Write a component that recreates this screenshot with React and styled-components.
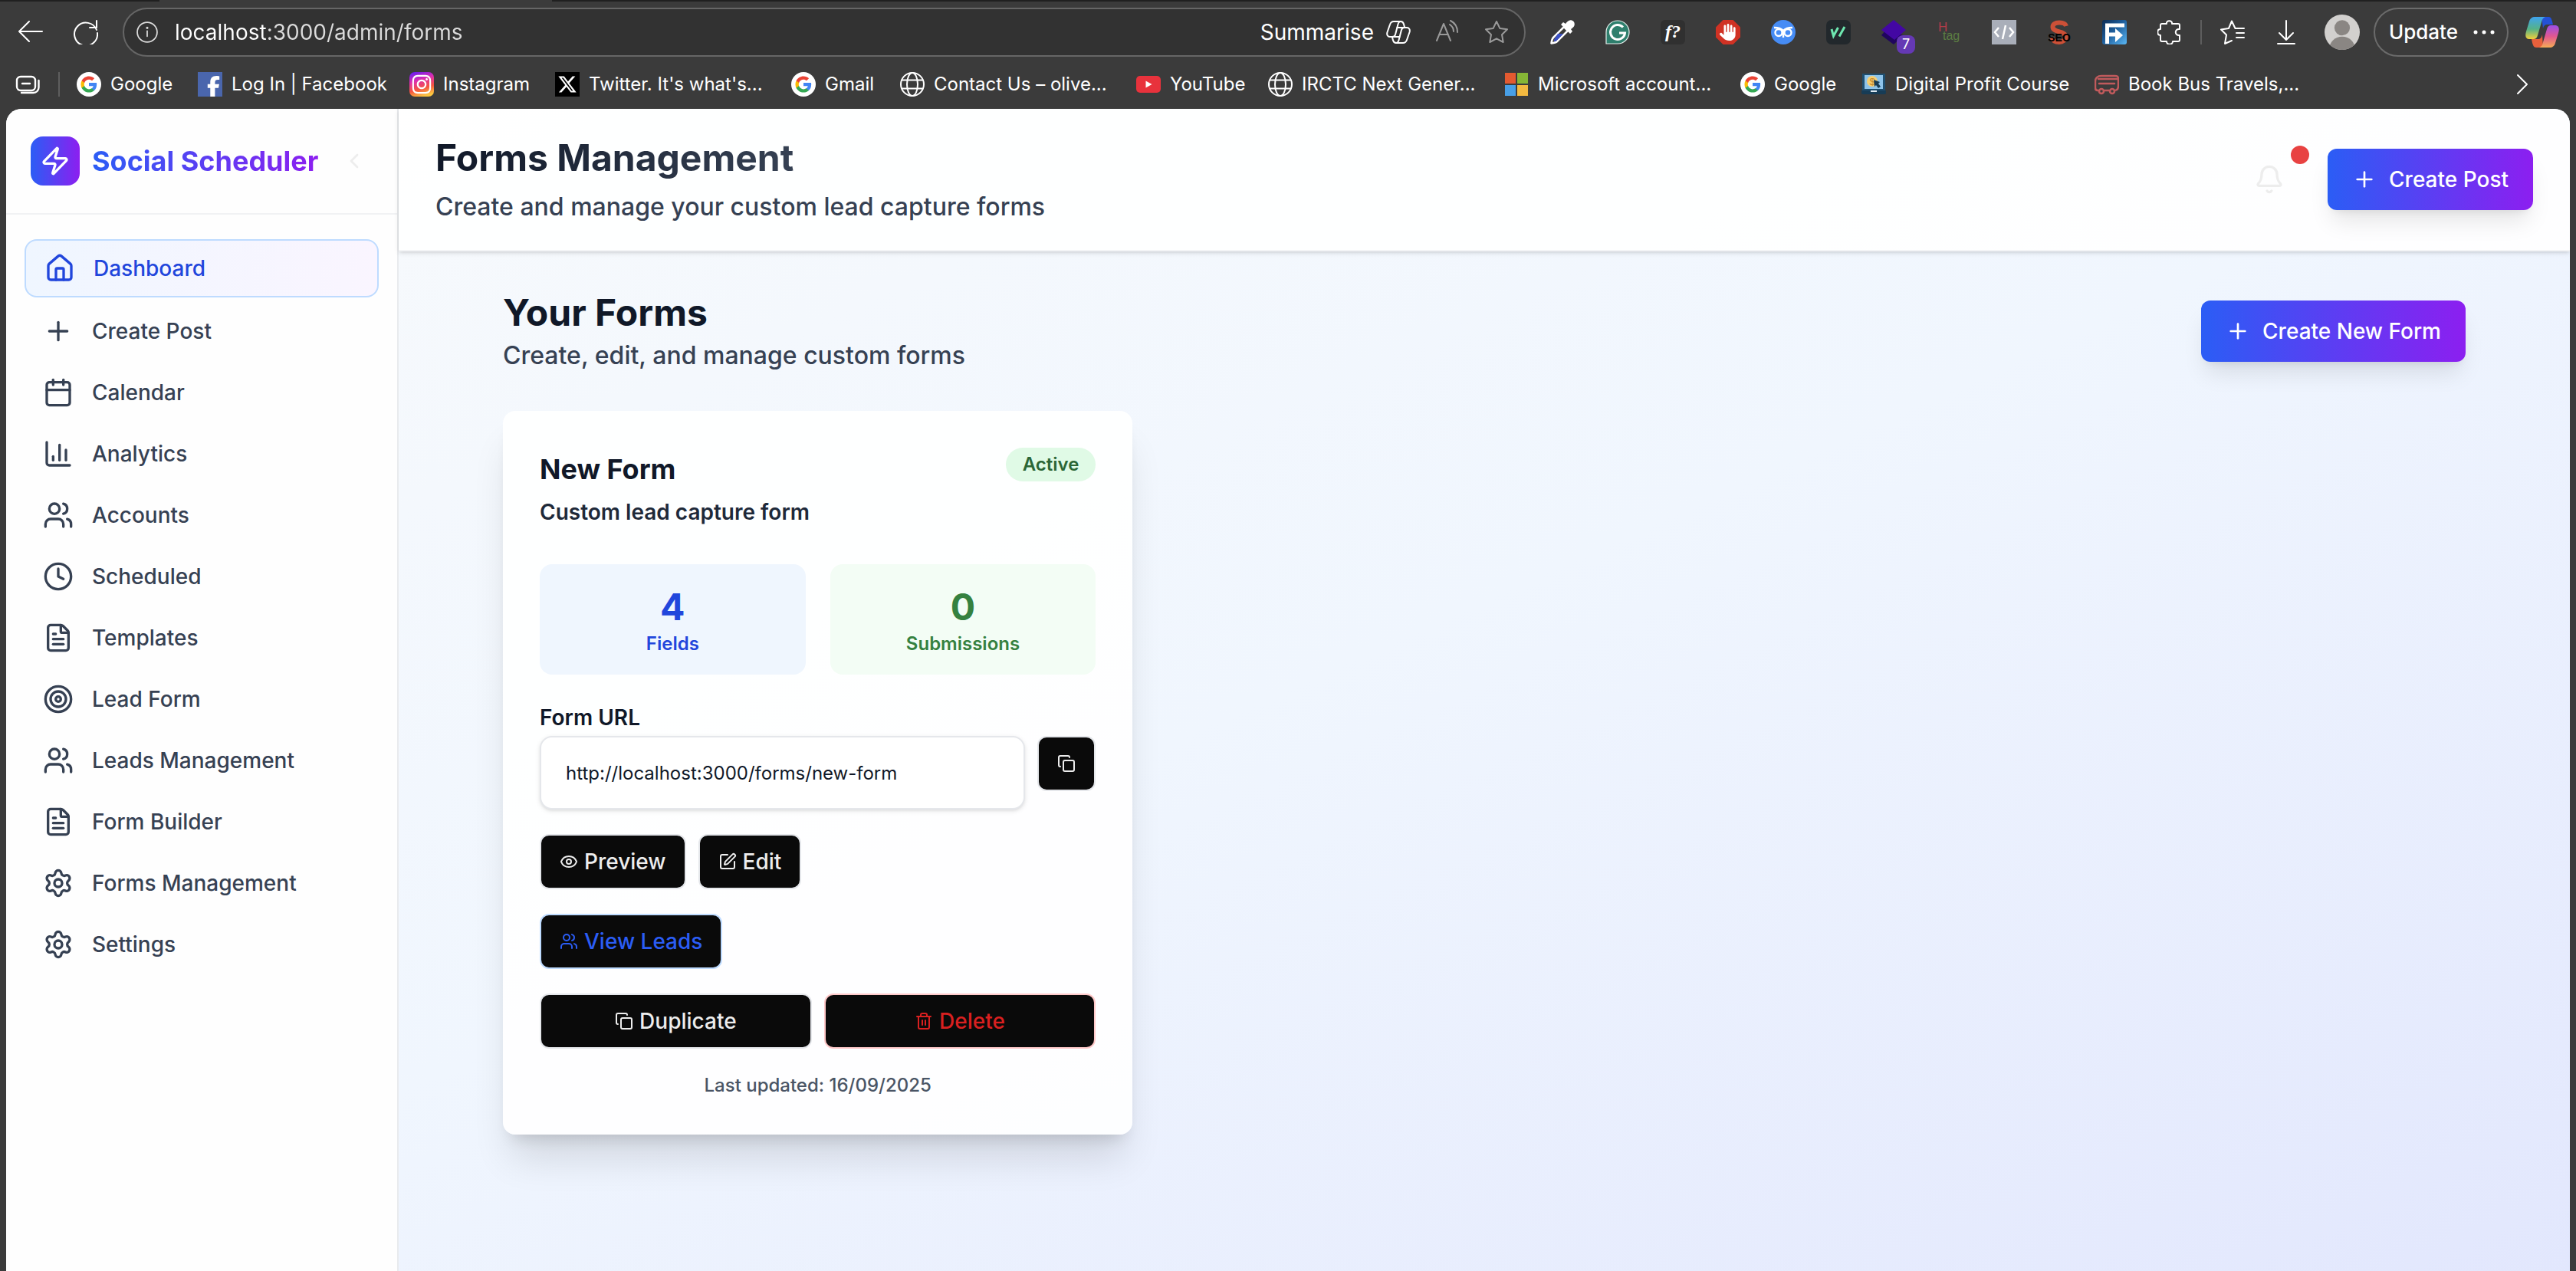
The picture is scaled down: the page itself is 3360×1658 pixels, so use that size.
import React from "react";
import styled, { createGlobalStyle, css } from "styled-components";
import {
  Bell, Calendar, ChartColumn, ChevronLeft, Clock, Copy, Eye, FileText, House,
  Plus, Settings, SquarePen, Target, Trash2, Users, Zap,
} from "lucide-react";
import { FaFacebookF, FaXTwitter, FaHand, FaInstagram } from "react-icons/fa6";

const brandGradient = "linear-gradient(90deg, #2b5df5 0%, #8c1ff0 100%)";

const GlobalStyle = createGlobalStyle`
  *, *::before, *::after { box-sizing: border-box; }
  body {
    margin: 0;
    background: #3b3b3b;
    font-family: Inter, "Liberation Sans", sans-serif;
    -webkit-font-smoothing: antialiased;
  }
  h1, h2, h3, p, ul, dl, dd, dt { margin: 0; padding: 0; }
  ul { list-style: none; }
  a { color: inherit; text-decoration: none; }
  button { font: inherit; cursor: pointer; margin: 0; }
  svg { display: block; flex: none; }
`;

/* ---------- browser chrome ---------- */

const Browser = styled.div`
  display: flex;
  flex-direction: column;
  min-height: 100vh;
  background: #3b3b3b;
  color: #ffffff;
`;

const TabStrip = styled.div`
  height: 2px;
  padding-left: 208px;
  background: #202020;
`;

const ActiveTab = styled.div`
  width: 512px;
  height: 2px;
  background: #3b3b3b;
`;

const Toolbar = styled.div`
  display: flex;
  align-items: center;
  padding: 8px 22px 0 24px;
`;

const ToolGroup = styled.div`
  display: flex;
  align-items: center;
  gap: ${(p) => p.$gap}px;
`;

const IconButton = styled.button`
  position: relative;
  display: flex;
  align-items: center;
  justify-content: center;
  padding: 0;
  border: 0;
  background: none;
  color: ${(p) => p.$color || "#ffffff"};
`;

const AddressBar = styled.div`
  flex: 1;
  display: flex;
  align-items: center;
  height: 64px;
  margin: 0 32px;
  padding: 0 20px 0 16px;
  border: 2px solid #666666;
  border-radius: 32px;
  background: #323232;
`;

const AddressInput = styled.input`
  flex: 1;
  min-width: 0;
  margin: 0 22px;
  padding: 0;
  border: 0;
  outline: 0;
  font: 400 28px/40px Inter, "Liberation Sans", sans-serif;
  color: transparent;
  background: linear-gradient(90deg, #ffffff 120px, #dcdcdc 120px);
  background-clip: text;
  -webkit-background-clip: text;
`;

const Summarise = styled.button`
  display: flex;
  align-items: center;
  gap: 16px;
  padding: 0;
  border: 0;
  background: none;
  color: #ffffff;
  font-size: 28px;
  line-height: 40px;
`;

const ChromeDivider = styled.span`
  width: 2px;
  height: 32px;
  margin: 0 ${(p) => p.$after}px 0 24px;
  background: #5e5e5e;
`;

const CountBadge = styled.span`
  position: absolute;
  left: 20px;
  top: 20px;
  width: 24px;
  height: 24px;
  border-radius: 8px;
  background: #6539b4;
  color: #ffffff;
  font-size: 18px;
  line-height: 24px;
  text-align: center;
`;

const UpdateButton = styled.button`
  display: flex;
  align-items: center;
  gap: 20px;
  height: 64px;
  margin: 0 22px 0 18px;
  padding: 0 16px 0 18px;
  border: 2px solid #6b6b6b;
  border-radius: 32px;
  background: none;
  color: #ffffff;
  font-size: 26px;
  font-weight: 500;
  line-height: 40px;
`;

const BookmarkBar = styled.nav`
  display: flex;
  align-items: center;
  padding: 20px 54px 16px 20px;
`;

const BookmarkList = styled.ul`
  flex: 1;
  display: flex;
  align-items: center;
  gap: 32px;
  min-width: 0;
`;

const Bookmark = styled.a`
  display: flex;
  align-items: center;
  gap: 12px;
  width: ${(p) => p.$width}px;
  font-size: 24px;
  line-height: 32px;
  white-space: nowrap;
`;

/* ---------- application shell ---------- */

const AppFrame = styled.div`
  flex: 1;
  display: flex;
  margin: 0 8px;
  overflow: hidden;
  border-radius: 20px 20px 0 0;
  background: linear-gradient(to bottom right, #f8fafc 0%, #f0f6fe 50%, #e2e7fd 100%);
  color: #101828;
`;

const Sidebar = styled.aside`
  flex: none;
  width: 512px;
  border-right: 2px solid #e9ebee;
  background: #fefefe;
`;

const SidebarHeader = styled.div`
  display: flex;
  align-items: center;
  gap: 16px;
  height: 138px;
  padding: 0 32px;
  border-bottom: 2px solid #f1f2f4;
`;

const LogoTile = styled.span`
  display: flex;
  align-items: center;
  justify-content: center;
  width: 64px;
  height: 64px;
  border-radius: 16px;
  background: ${brandGradient};
  color: #ffffff;
`;

const LogoText = styled.span`
  font-size: 36px;
  font-weight: 700;
  line-height: 56px;
  white-space: nowrap;
  color: transparent;
  background: ${brandGradient};
  background-clip: text;
  -webkit-background-clip: text;
`;

const CollapseButton = styled(IconButton)`
  margin-left: auto;
  width: 48px;
  height: 48px;
`;

const NavList = styled.ul`
  display: flex;
  flex-direction: column;
  gap: 8px;
  padding: 32px 24px;
`;

const NavLink = styled.a`
  display: flex;
  align-items: center;
  gap: 24px;
  padding: 16px 24px;
  border-radius: 16px;
  color: #364153;
  font-size: 28px;
  font-weight: 500;
  line-height: 40px;
  ${(p) =>
    p.$active &&
    css`
      border: 2px solid #bedbff;
      background: linear-gradient(90deg, #eff6ff, #faf5ff);
      color: #2146dc;
    `}
`;

const Workspace = styled.div`
  flex: 1;
  min-width: 0;
`;

const PageHeader = styled.header`
  display: flex;
  align-items: center;
  justify-content: space-between;
  padding: 32px 48px;
  border-bottom: 2px solid #f3f4f6;
  background: rgba(255, 255, 255, 0.9);
  box-shadow: 0 2px 6px rgba(0, 0, 0, 0.12), 0 2px 4px -2px rgba(0, 0, 0, 0.12);
`;

const Heading = styled.div`
  display: flex;
  flex-direction: column;
  gap: ${(p) => p.$gap}px;
`;

const PageTitle = styled.h1`
  width: fit-content;
  font-size: 48px;
  font-weight: 700;
  line-height: 64px;
  color: transparent;
  background: linear-gradient(90deg, #101828, #364153);
  background-clip: text;
  -webkit-background-clip: text;
`;

const SectionTitle = styled.h2`
  font-size: 48px;
  font-weight: 700;
  line-height: 64px;
`;

const Lead = styled.p`
  color: #364153;
  font-size: 32px;
  font-weight: 500;
  line-height: 48px;
`;

const HeaderActions = styled.div`
  display: flex;
  align-items: center;
  gap: 32px;
`;

const BellButton = styled(IconButton)`
  width: 88px;
  height: 72px;
`;

const AlertDot = styled.span`
  position: absolute;
  top: -8px;
  right: -8px;
  width: 24px;
  height: 24px;
  border-radius: 50%;
  background: #e84242;
`;

const PrimaryButton = styled.button`
  display: flex;
  align-items: center;
  gap: 16px;
  height: 80px;
  padding: 0 32px;
  border: 0;
  border-radius: 12px;
  background: ${brandGradient};
  color: #ffffff;
  font-size: 28px;
  font-weight: 500;
  line-height: 40px;
  white-space: nowrap;
  box-shadow: 0 20px 30px -6px rgba(0, 0, 0, 0.1), 0 8px 12px -8px rgba(0, 0, 0, 0.1);
`;

const Main = styled.main`
  display: flex;
  flex-direction: column;
  gap: 48px;
  max-width: 2656px;
  margin: 0 auto;
  padding: 48px;
`;

const SectionHeader = styled.div`
  display: flex;
  align-items: center;
  justify-content: space-between;
`;

const CardGrid = styled.div`
  display: grid;
  grid-template-columns: repeat(3, minmax(0, 1fr));
  gap: 48px;
`;

/* ---------- form card ---------- */

const Card = styled.article`
  display: flex;
  flex-direction: column;
  gap: 32px;
  padding: 48px;
  border-radius: 16px;
  background: rgba(255, 255, 255, 0.9);
  box-shadow: 0 40px 50px -10px rgba(0, 0, 0, 0.12), 0 16px 20px -12px rgba(0, 0, 0, 0.14);
`;

const CardHeader = styled.div`
  display: flex;
  align-items: flex-start;
  justify-content: space-between;
  margin-bottom: 16px;
`;

const CardTitle = styled.h3`
  font-size: 36px;
  font-weight: 700;
  line-height: 56px;
`;

const CardText = styled.p`
  color: #1e2939;
  font-size: 28px;
  font-weight: 600;
  line-height: 40px;
`;

const StatusBadge = styled.span`
  padding: 6px 22px;
  border-radius: 22px;
  background: #e0fae6;
  color: #2b6636;
  font-size: 24px;
  font-weight: 600;
  line-height: 32px;
`;

const Stats = styled.dl`
  display: grid;
  grid-template-columns: 1fr 1fr;
  gap: 32px;
`;

const Stat = styled.div`
  display: flex;
  flex-direction: column-reverse;
  padding: 24px;
  border-radius: 16px;
  background: ${(p) => p.$background};
  color: ${(p) => p.$color};
  text-align: center;
`;

const StatLabel = styled.dt`
  font-size: 24px;
  font-weight: 600;
  line-height: 32px;
`;

const StatValue = styled.dd`
  font-size: 48px;
  font-weight: 700;
  line-height: 64px;
`;

const UrlField = styled.div`
  display: flex;
  flex-direction: column;
`;

const UrlLabel = styled.label`
  font-size: 28px;
  font-weight: 600;
  line-height: 48px;
`;

const Row = styled.div`
  display: flex;
  align-items: flex-start;
  gap: 16px;
`;

const UrlInput = styled.input`
  flex: 1;
  min-width: 0;
  height: 96px;
  padding: 0 32px;
  border: 2px solid #e5e7eb;
  border-radius: 16px;
  outline: 0;
  background: #ffffff;
  color: #101828;
  font: 400 24px/32px Inter, "Liberation Sans", sans-serif;
  box-shadow: 0 2px 6px rgba(0, 0, 0, 0.1), 0 2px 4px -2px rgba(0, 0, 0, 0.1);
`;

const tones = {
  plain: { text: "#ededed", border: "#e5e7eb" },
  blue: { text: "#2b5df5", border: "#bedbff" },
  red: { text: "#d92020", border: "#ffc9c9" },
};

const ActionButton = styled.button`
  flex: ${(p) => (p.$wide ? 1 : "none")};
  display: flex;
  align-items: center;
  justify-content: center;
  gap: 8px;
  height: 72px;
  padding: 0 24px;
  border: 2px solid ${(p) => tones[p.$tone].border};
  border-radius: 12px;
  background: #0a0a0a;
  color: ${(p) => tones[p.$tone].text};
  font-size: 28px;
  font-weight: 500;
  line-height: 40px;
`;

const Updated = styled.p`
  color: #4a5565;
  font-size: 24px;
  font-weight: 500;
  line-height: 32px;
  text-align: center;
`;

/* ---------- chrome icons ---------- */

const Line = ({ children, size = 32, width = 2, ...rest }) => (
  <svg width={size} height={size} viewBox="0 0 32 32" fill="none" stroke="currentColor"
    strokeWidth={width} strokeLinecap="round" strokeLinejoin="round" aria-hidden="true" {...rest}>
    {children}
  </svg>
);

const Art = ({ children, size = 32, ...rest }) => (
  <svg width={size} height={size} viewBox="0 0 32 32" aria-hidden="true" {...rest}>{children}</svg>
);

const BackIcon = () => <Line><path d="M31 15H1M14 2 1 15l13 13" /></Line>;
const ReloadIcon = () => <Line><path d="M30 13A15 15 0 1 0 31 17M30 1v9h-9" /></Line>;
const InfoIcon = () => (
  <Line size={28}><circle cx="16" cy="16" r="14.8" /><path d="M16 14v8" /><circle cx="16" cy="9.5" r=".8" fill="currentColor" /></Line>
);
const CopilotOutline = () => (
  <Line>
    <path d="M10 2h9c-2 0-3 1.500-3.600 4L12 19c-.6 2-2 3-4 3H5c-3 0-4.500-2.500-3.500-6L5 6c.8-2.500 2.500-4 5-4z" />
    <path d="M22 30h-9c2 0 3-1.500 3.600-4L20 13c.6-2 2-3 4-3h3c3 0 4.500 2.500 3.500 6L27 26c-.8 2.500-2.500 4-5 4z" />
    <path d="M19 2c2.500 0 3.500 1.500 4 3.500l1.200 4.500M13 30c-2.500 0-3.500-1.500-4-3.500L7.800 22M14.500 10H24M8 22h9.500" />
  </Line>
);
const ReadAloudIcon = () => <Line><path d="M2 27 11 5l9 22M5 19h12M19 6c3 2 5 5 5 9M20 1c6 3 9 8 9 15" /></Line>;
const StarIcon = () => (
  <Line><path d="M16 2l4.300 8.900 9.700 1.400-7 6.900 1.700 9.800L16 24.300 7.300 29 9 19.200l-7-6.900 9.700-1.400z" /></Line>
);
const DropperIcon = () => (
  <Art>
    <path d="M18 9 4 23c-1 1-2 4-2.500 7.500C5 30 8 29 9 28l14-14z" fill="#3b3b3b" stroke="#fff" strokeWidth="2.600" strokeLinejoin="round" />
    <path d="M10 18h7l-8.500 9c-1 .8-3 1.200-3.500 1-.3-1 .2-3 1-4z" fill="#3b50c4" />
    <path d="m14 6 3-3 3 2c2-3 5-5.500 8-4.500 4 1 5 6 2 9-1 1-2 2-3 2.500l2 3-3 3z" fill="#fff" />
  </Art>
);
const GrammarIcon = () => (
  <Art>
    <path d="M1 31V16A15 15 0 1 1 16 31z" fill="#2f7f6d" stroke="#e8f2ef" strokeWidth="1.200" />
    <path d="M23 9.500A9.500 9.500 0 1 0 25.500 17H18" fill="none" stroke="#fff" strokeWidth="3" />
  </Art>
);
const FontIcon = () => (
  <Art>
    <rect width="32" height="32" rx="6" fill="#303030" />
    <text x="16" y="23" textAnchor="middle" fill="#fff" fontFamily="Liberation Serif, serif" fontStyle="italic" fontWeight="700" fontSize="24">f?</text>
  </Art>
);
const StopHandIcon = () => (
  <Art>
    <path d="M9.500 0h13L32 9.500v13L22.500 32h-13L0 22.500v-13z" fill="#d03224" />
    <FaHand color="#fff" size={22} x="5" y="5" />
  </Art>
);
const OwlIcon = () => (
  <Art>
    <circle cx="16" cy="16" r="16" fill="#468cf5" />
    <g fill="none" stroke="#fff" strokeWidth="2.400">
      <circle cx="10" cy="16.500" r="4.500" /><circle cx="22" cy="16.500" r="4.500" />
      <path d="M4 10c5 0 9 1 12 4 3-3 7-4 12-4M16 15v8" />
    </g>
  </Art>
);
const SlashIcon = () => (
  <Art>
    <rect width="32" height="32" rx="7" fill="#22282c" />
    <path d="M7 12l2.500 9 6-11M17 21.500l7-12.500" fill="none" stroke="#6ee7b0" strokeWidth="3" />
  </Art>
);
const LayersIcon = () => (
  <Art>
    <path d="M0 20 5 14l24 6-13 12z" fill="#20055e" />
    <path d="M16 0 32 13 17 26 0 13z" fill="#4307a3" />
  </Art>
);
const HtagIcon = () => (
  <Art>
    <text x="2" y="15" fill="#b23c49" fontFamily="Liberation Sans, sans-serif" fontSize="17">H</text>
    <text x="8" y="26" fill="#5b7d43" fontFamily="Liberation Sans, sans-serif" fontSize="16">tag</text>
  </Art>
);
const CodeIcon = () => (
  <Art>
    <path d="M0 0h32v32H0z" fill="#a9aeb9" />
    <path d="M9 10l-5 6 5 6M23 10l5 6-5 6M18 7l-4 18" fill="none" stroke="#fff" strokeWidth="2.500" />
  </Art>
);
const SeoIcon = () => (
  <Art>
    <path d="M25 8C24 4.500 21 3.500 16 3.500 10 3.500 7.500 6 7.500 9c0 8 17 5 17 13 0 4-4 7-8.500 7-6 0-8.500-2-9.500-6" fill="none" stroke="#cc5037" strokeWidth="6" />
    <text x="16" y="28" textAnchor="middle" fill="#000" fontFamily="Liberation Sans, sans-serif" fontWeight="700" fontSize="14">SEO</text>
  </Art>
);
const ForwardIcon = () => (
  <Art>
    <defs><linearGradient id="fwd" x1="0" y1="0" x2="1" y2="1"><stop stopColor="#0d2b52" /><stop offset=".45" stopColor="#1d5d9b" /><stop offset="1" stopColor="#5bb8f5" /></linearGradient></defs>
    <rect width="32" height="32" rx="3" fill="url(#fwd)" />
    <path d="M6.500 31V7H29M7 19h14" fill="none" stroke="#fff" strokeWidth="5" />
    <path d="M17 11l10 9-10 9z" fill="#fff" />
  </Art>
);
const PuzzleIcon = () => (
  <Line><path d="M6 5h6c-1-5 8-5 7 0h8c1 0 2 1 2 2v5c-7-1-7 9 0 8v6c0 1-1 2-2 2h-7c0 5-8 5-8 0H6c-1 0-2-1-2-2v-6c-5 0-5-8 0-8V7c0-1 1-2 2-2z" /></Line>
);
const FavoritesIcon = () => (
  <Line><path d="M31 11H19.500L15 1.500 11 11 1 12.500l7 7L6 31l9-4M21 17h10M21 23h10" /></Line>
);
const DownloadIcon = () => <Line><path d="M18 1v24M9 17l9 9 9-9M7 31h22" /></Line>;
const AvatarIcon = () => (
  <Art size={46}>
    <defs><clipPath id="face"><circle cx="16" cy="16" r="16" /></clipPath></defs>
    <g clipPath="url(#face)">
      <path d="M0 0h32v32H0z" fill="#d2d0ce" />
      <circle cx="16" cy="12" r="7" fill="#8a8683" />
      <circle cx="16" cy="32" r="12" fill="#8a8683" />
    </g>
  </Art>
);
const DotsIcon = () => (
  <svg width="28" height="8" viewBox="0 0 28 8" fill="currentColor" aria-hidden="true">
    <circle cx="3" cy="4" r="2.500" /><circle cx="14" cy="4" r="2.500" /><circle cx="25" cy="4" r="2.500" />
  </svg>
);
const CopilotIcon = () => (
  <svg width="44" height="44" viewBox="0 0 44 44" aria-hidden="true">
    <defs>
      <linearGradient id="cpA" x1="0" y1="0" x2="0" y2="1"><stop stopColor="#3fa4f0" /><stop offset=".55" stopColor="#55b287" /><stop offset="1" stopColor="#f2cf3b" /></linearGradient>
      <linearGradient id="cpB" x1="0" y1="0" x2="0" y2="1"><stop stopColor="#9a4ee8" /><stop offset=".5" stopColor="#e2578f" /><stop offset="1" stopColor="#f5ac55" /></linearGradient>
    </defs>
    <path d="M21 2h9c3 0 4 2 5 6l1 4h-7c-4 0-5 2-6 5z" fill="#2451d6" />
    <path d="M23 42h-9c-3 0-4-3-5-6l-1-5h8c4 0 5-2 6-6z" fill="#e8603c" />
    <path d="M12 2h14c-3 1-4 3-5 7l-5 17c-1 4-3 5-6 5H6c-5 0-7-3-5-10L5 8c1-4 4-6 7-6z" fill="url(#cpA)" />
    <path d="M32 42H18c3-1 4-3 5-7l5-17c1-4 3-5 6-5h4c5 0 7 3 5 10l-4 13c-1 4-4 6-7 6z" fill="url(#cpB)" />
  </svg>
);
const DrawerIcon = () => (
  <Line width={2.400}><rect x="2" y="6" width="24" height="18" rx="5" /><path d="M9 15h10M30.500 11v9c0 4-3 7-7 7H8" /></Line>
);
const GoogleIcon = () => (
  <Art>
    <circle cx="16" cy="16" r="16" fill="#fff" />
    <g transform="translate(4.500 4.500) scale(.96)">
      <path fill="#4285F4" d="M22.560 12.250c0-.78-.07-1.530-.2-2.250H12v4.260h5.920c-.26 1.370-1.040 2.530-2.210 3.310v2.770h3.570c2.080-1.920 3.280-4.740 3.280-8.090z" />
      <path fill="#34A853" d="M12 23c2.970 0 5.460-.98 7.280-2.660l-3.570-2.770c-.98.66-2.230 1.060-3.710 1.060-2.860 0-5.290-1.930-6.160-4.530H2.180v2.840C3.990 20.530 7.700 23 12 23z" />
      <path fill="#FBBC05" d="M5.840 14.090c-.22-.66-.35-1.360-.35-2.090s.13-1.430.35-2.090V7.070H2.180C1.430 8.550 1 10.220 1 12s.43 3.450 1.180 4.930l3.660-2.840z" />
      <path fill="#EA4335" d="M12 5.380c1.620 0 3.060.56 4.210 1.640l3.150-3.150C17.450 2.090 14.970 1 12 1 7.700 1 3.990 3.470 2.180 7.070l3.660 2.840c.87-2.600 3.300-4.530 6.160-4.530z" />
    </g>
  </Art>
);
const FacebookIcon = () => (
  <Art>
    <path d="M0 0h32v32H0z" fill="#4a66ad" />
    <FaFacebookF color="#fff" size={27} x="7" y="5" />
  </Art>
);
const InstagramIcon = () => (
  <Art>
    <defs><linearGradient id="ig" x1="0.200" y1="0" x2="0.500" y2="1"><stop stopColor="#6a1df0" /><stop offset=".35" stopColor="#dc2fb0" /><stop offset=".7" stopColor="#f5543f" /><stop offset="1" stopColor="#fbc53f" /></linearGradient></defs>
    <rect width="32" height="32" rx="7" fill="url(#ig)" />
    <FaInstagram color="#fff" size={28} x="2" y="2" />
  </Art>
);
const XIcon = () => (
  <Art>
    <path d="M0 0h32v32H0z" fill="#000" />
    <FaXTwitter color="#fff" size={26} x="3" y="3" />
  </Art>
);
const GlobeIcon = () => (
  <Line><circle cx="16" cy="16" r="15" /><ellipse cx="16" cy="16" rx="7" ry="15" /><path d="M2.500 10.500h27M2.500 21.500h27" /></Line>
);
const YouTubeIcon = () => (
  <Art><rect y="5" width="32" height="22" rx="5" fill="#e8323c" /><path d="M12.500 11.500v9l8-4.500z" fill="#fff" /></Art>
);
const MicrosoftIcon = () => (
  <Art>
    <path d="M1 1h14v14H1z" fill="#e35a30" /><path d="M17 1h14v14H17z" fill="#86b636" />
    <path d="M1 17h14v14H1z" fill="#489fe6" /><path d="M17 17h14v14H17z" fill="#f3b940" />
  </Art>
);
const CourseIcon = () => (
  <Art>
    <path d="M1 2h30v22H1z" fill="#1f4f70" /><path d="M4 4h24v18H4z" fill="#8fc4ea" />
    <circle cx="14" cy="12" r="7" fill="#f5ce73" />
    <text x="14" y="17" textAnchor="middle" fill="#c7892a" fontFamily="Liberation Sans, sans-serif" fontSize="13">$</text>
    <path d="m16 10 8 3-2 2 3 4-3 2-3-4-2 2z" fill="#173c56" />
    <path d="M0 24h32v3c0 1-1 2-2 2H2c-1 0-2-1-2-2z" fill="#173c56" /><path d="M12 24h8v2h-8z" fill="#dfeaf2" />
  </Art>
);
const BusIcon = () => (
  <Line width={2.500} stroke="#c05a5c">
    <path d="M9 5h18c3 0 4 1 4 4v9c0 4-2 6-5 6M5 9h25M9 5C4 5 1 8 1 12v9c0 2 1 3 4 3M6 15h20M13 24h6" /><circle cx="9" cy="25" r="3" /><circle cx="23" cy="25" r="3" />
  </Line>
);
const ChevronIcon = () => <Line><path d="m10 4 12 12-12 12" /></Line>;

/* ---------- data ---------- */

const bookmarks = [
  { label: "Google", icon: GoogleIcon, width: 126 },
  { label: "Log In | Facebook", icon: FacebookIcon, width: 244 },
  { label: "Instagram", icon: InstagramIcon, width: 158 },
  { label: "Twitter. It's what's...", icon: XIcon, width: 276 },
  { label: "Gmail", icon: GoogleIcon, width: 110 },
  { label: "Contact Us – olive...", icon: GlobeIcon, width: 276 },
  { label: "YouTube", icon: YouTubeIcon, width: 140 },
  { label: "IRCTC Next Gener...", icon: GlobeIcon, width: 276 },
  { label: "Microsoft account...", icon: MicrosoftIcon, width: 276 },
  { label: "Google", icon: GoogleIcon, width: 126 },
  { label: "Digital Profit Course", icon: CourseIcon, width: 272 },
  { label: "Book Bus Travels,...", icon: BusIcon, width: 276 },
];

const extensions = [
  { label: "Color picker", icon: DropperIcon },
  { label: "Writing assistant", icon: GrammarIcon },
  { label: "Font finder", icon: FontIcon },
  { label: "Ad blocker", icon: StopHandIcon },
  { label: "Owl", icon: OwlIcon },
  { label: "Keyword tool", icon: SlashIcon },
  { label: "Layers", icon: LayersIcon, count: 7 },
  { label: "Heading tags", icon: HtagIcon },
  { label: "Source viewer", icon: CodeIcon },
  { label: "SEO checker", icon: SeoIcon },
  { label: "Forward", icon: ForwardIcon },
  { label: "Extensions", icon: PuzzleIcon },
];

const navItems = [
  { label: "Dashboard", icon: House, active: true },
  { label: "Create Post", icon: Plus },
  { label: "Calendar", icon: Calendar },
  { label: "Analytics", icon: ChartColumn },
  { label: "Accounts", icon: Users },
  { label: "Scheduled", icon: Clock },
  { label: "Templates", icon: FileText },
  { label: "Lead Form", icon: Target },
  { label: "Leads Management", icon: Users },
  { label: "Form Builder", icon: FileText },
  { label: "Forms Management", icon: Settings },
  { label: "Settings", icon: Settings },
];

/* ---------- sections ---------- */

const BrowserToolbar = () => (
  <Toolbar>
    <ToolGroup $gap={40}>
      <IconButton aria-label="Back"><BackIcon /></IconButton>
      <IconButton aria-label="Reload"><ReloadIcon /></IconButton>
    </ToolGroup>
    <AddressBar>
      <IconButton aria-label="Site information" $color="#dcdcdc"><InfoIcon /></IconButton>
      <AddressInput aria-label="Address" defaultValue="localhost:3000/admin/forms" />
      <ToolGroup $gap={32}>
        <Summarise>Summarise<CopilotOutline /></Summarise>
        <IconButton aria-label="Read aloud" $color="#9a9a9a"><ReadAloudIcon /></IconButton>
        <IconButton aria-label="Add to favourites" $color="#9a9a9a"><StarIcon /></IconButton>
      </ToolGroup>
    </AddressBar>
    <ToolGroup $gap={40}>
      {extensions.map(({ label, icon: Icon, count }) => (
        <IconButton key={label} aria-label={label}>
          <Icon />
          {count && <CountBadge>{count}</CountBadge>}
        </IconButton>
      ))}
    </ToolGroup>
    <ChromeDivider $after={24} />
    <ToolGroup $gap={36}>
      <IconButton aria-label="Favourites"><FavoritesIcon /></IconButton>
      <IconButton aria-label="Downloads"><DownloadIcon /></IconButton>
      <IconButton aria-label="Profile"><AvatarIcon /></IconButton>
    </ToolGroup>
    <UpdateButton>Update<DotsIcon /></UpdateButton>
    <IconButton aria-label="Copilot"><CopilotIcon /></IconButton>
  </Toolbar>
);

const Bookmarks = () => (
  <BookmarkBar aria-label="Bookmarks">
    <IconButton aria-label="Workspaces"><DrawerIcon /></IconButton>
    <ChromeDivider $after={22} />
    <BookmarkList>
      {bookmarks.map(({ label, icon: Icon, width }, i) => (
        <li key={i}><Bookmark href="#" $width={width}><Icon />{label}</Bookmark></li>
      ))}
    </BookmarkList>
    <IconButton aria-label="More bookmarks"><ChevronIcon /></IconButton>
  </BookmarkBar>
);

const FormCard = () => (
  <Card>
    <CardHeader>
      <Heading $gap={8}>
        <CardTitle>New Form</CardTitle>
        <CardText>Custom lead capture form</CardText>
      </Heading>
      <StatusBadge>Active</StatusBadge>
    </CardHeader>
    <Stats>
      <Stat $background="#eff6fe" $color="#2146dc">
        <StatLabel>Fields</StatLabel>
        <StatValue>4</StatValue>
      </Stat>
      <Stat $background="#f3fdf5" $color="#35813f">
        <StatLabel>Submissions</StatLabel>
        <StatValue>0</StatValue>
      </Stat>
    </Stats>
    <UrlField>
      <UrlLabel htmlFor="form-url">Form URL</UrlLabel>
      <Row>
        <UrlInput id="form-url" readOnly value="http://localhost:3000/forms/new-form" />
        <ActionButton $tone="plain" aria-label="Copy form URL"><Copy size={24} /></ActionButton>
      </Row>
    </UrlField>
    <Row>
      <ActionButton $tone="plain"><Eye size={24} />Preview</ActionButton>
      <ActionButton $tone="plain"><SquarePen size={24} />Edit</ActionButton>
    </Row>
    <Row>
      <ActionButton $tone="blue"><Users size={24} />View Leads</ActionButton>
    </Row>
    <Row>
      <ActionButton $tone="plain" $wide><Copy size={24} />Duplicate</ActionButton>
      <ActionButton $tone="red" $wide><Trash2 size={24} />Delete</ActionButton>
    </Row>
    <Updated>Last updated: 16/09/2025</Updated>
  </Card>
);

export default function App() {
  return (
    <>
      <GlobalStyle />
      <Browser>
        <TabStrip><ActiveTab /></TabStrip>
        <BrowserToolbar />
        <Bookmarks />
        <AppFrame>
          <Sidebar>
            <SidebarHeader>
              <LogoTile><Zap size={40} /></LogoTile>
              <LogoText>Social Scheduler</LogoText>
              <CollapseButton aria-label="Collapse sidebar" $color="#ededed"><ChevronLeft size={32} /></CollapseButton>
            </SidebarHeader>
            <nav aria-label="Main">
              <NavList>
                {navItems.map(({ label, icon: Icon, active }) => (
                  <li key={label}>
                    <NavLink href="#" $active={active}><Icon size={40} />{label}</NavLink>
                  </li>
                ))}
              </NavList>
            </nav>
          </Sidebar>
          <Workspace>
            <PageHeader>
              <Heading $gap={8}>
                <PageTitle>Forms Management</PageTitle>
                <Lead>Create and manage your custom lead capture forms</Lead>
              </Heading>
              <HeaderActions>
                <BellButton aria-label="Notifications" $color="#ededed"><Bell size={40} /><AlertDot /></BellButton>
                <PrimaryButton><Plus size={32} />Create Post</PrimaryButton>
              </HeaderActions>
            </PageHeader>
            <Main>
              <SectionHeader>
                <Heading $gap={0}>
                  <SectionTitle>Your Forms</SectionTitle>
                  <Lead>Create, edit, and manage custom forms</Lead>
                </Heading>
                <PrimaryButton><Plus size={32} />Create New Form</PrimaryButton>
              </SectionHeader>
              <CardGrid>
                <FormCard />
              </CardGrid>
            </Main>
          </Workspace>
        </AppFrame>
      </Browser>
    </>
  );
}
